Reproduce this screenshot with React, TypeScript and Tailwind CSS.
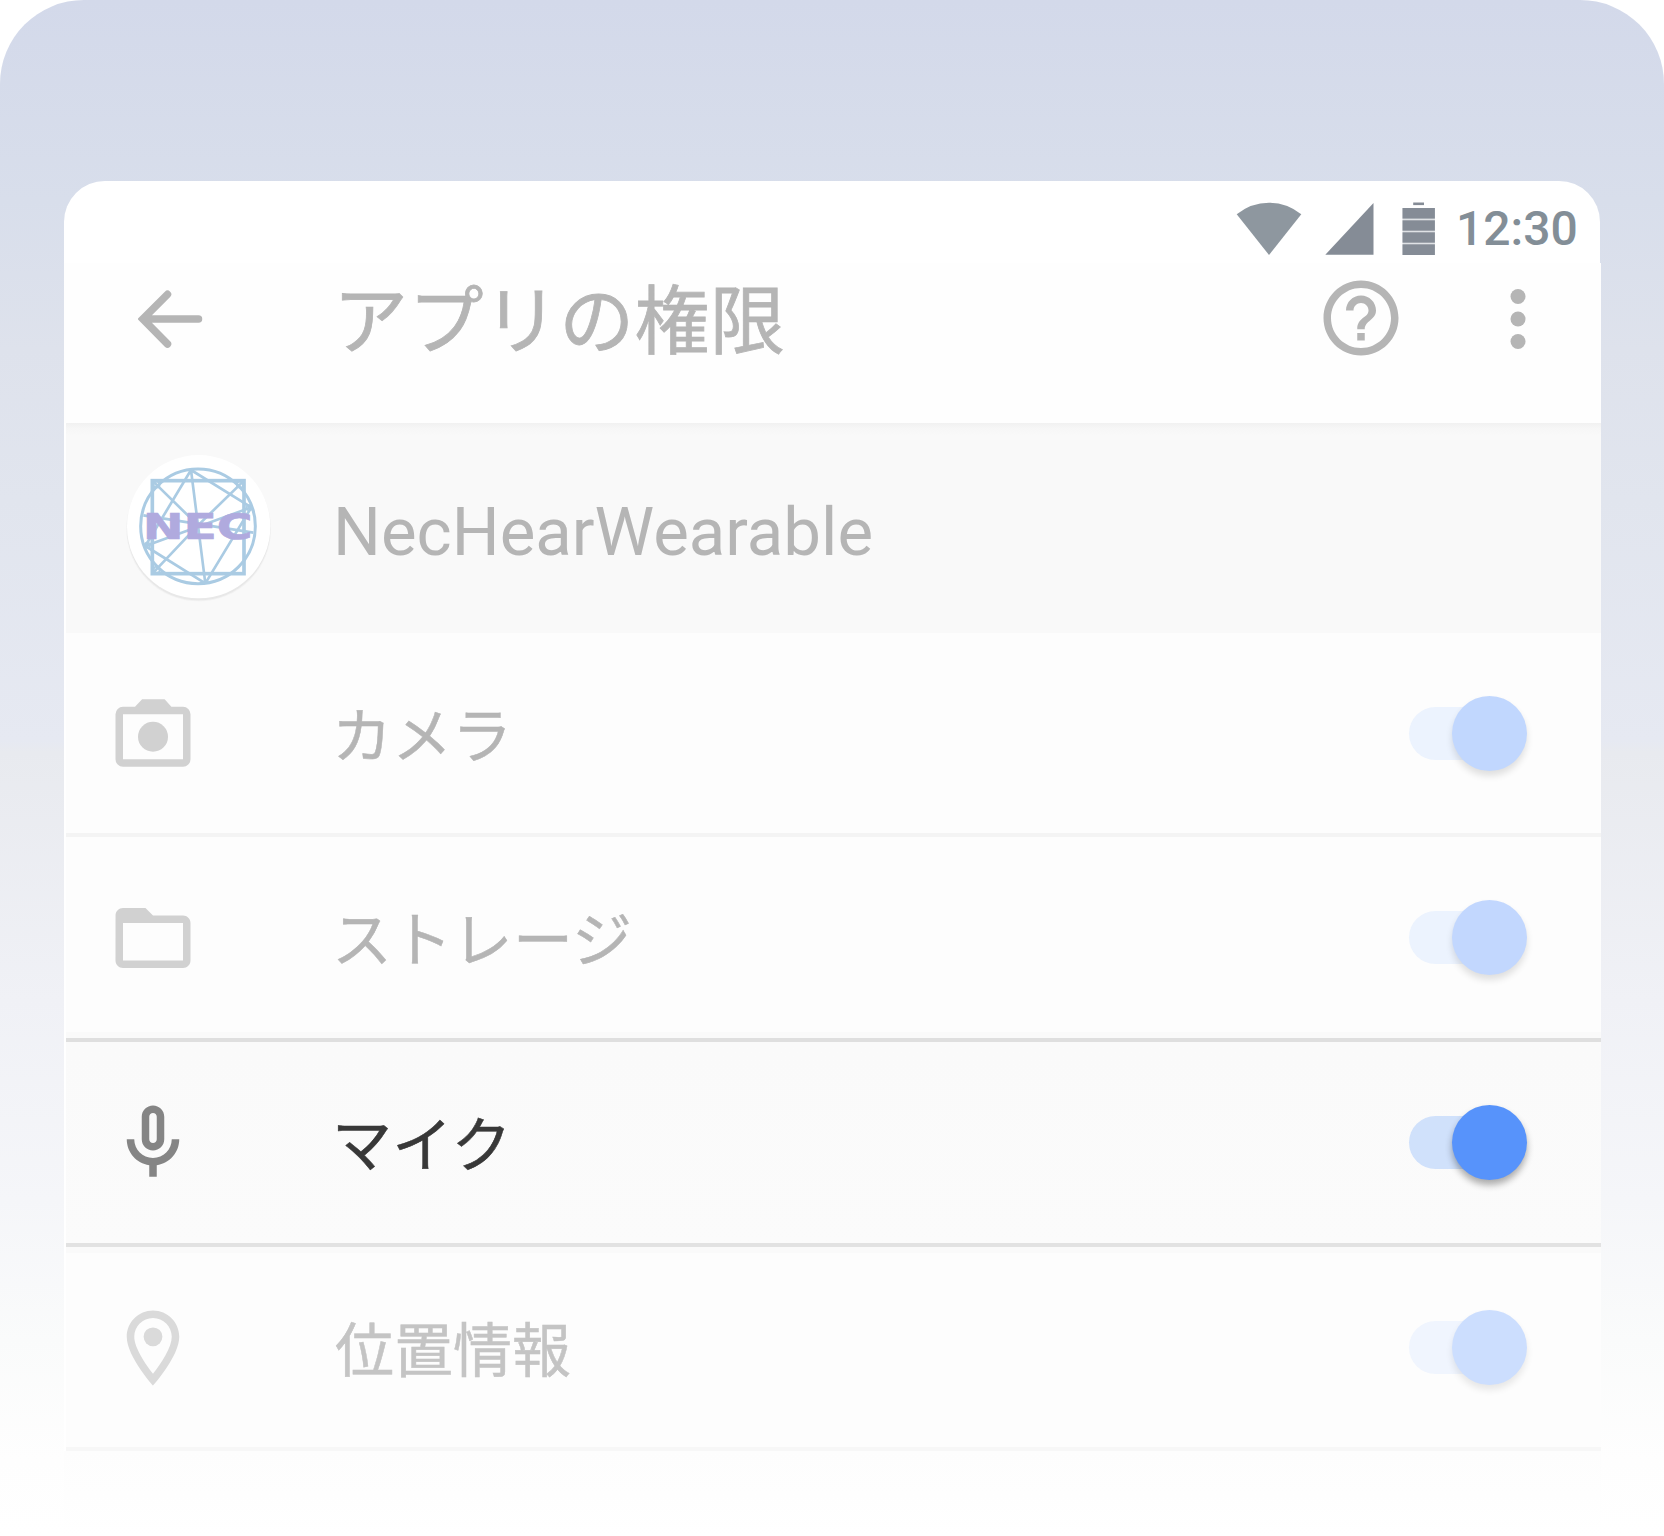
import type { ReactNode } from "react";

const FONT = "font-['Roboto','Noto_Sans_CJK_JP',sans-serif]";

function Icon({ children, className }: { children: ReactNode; className: string }) {
  return (
    <svg viewBox="0 0 24 24" className={`block size-[90px] shrink-0 fill-current ${className}`}>
      {children}
    </svg>
  );
}

function StatusBar() {
  return (
    <div className="flex h-[82px] items-start rounded-t-[41px] bg-white">
      <svg viewBox="0 0 66 54" className="mt-[21px] ml-[1172px] h-[54px] w-[66px] shrink-0">
        <path d="M.7 12.3Q15 .7 33 .7T65.3 12.3L33 53z" fill="#8e979f" />
      </svg>
      <svg viewBox="0 0 49 54" className="mt-[21px] ml-[23px] h-[54px] w-[49px] shrink-0">
        <path d="M.3 52.8 48.5 1v51.8z" fill="#858c96" />
      </svg>
      <svg viewBox="0 0 33 54" className="mt-[21px] ml-[28px] h-[54px] w-[33px] shrink-0">
        <rect x=".5" y="6" width="32.4" height="47" fill="#dfe2e5" />
        <g fill="#858c96">
          <rect x="11.2" y=".5" width="10.8" height="2.6" />
          <rect x=".5" y="6" width="32.4" height="10.6" />
          <rect x=".5" y="18.3" width="32.4" height="10.4" />
          <rect x=".5" y="30.3" width="32.4" height="10.4" />
          <rect x=".5" y="42.3" width="32.4" height="10.7" />
        </g>
      </svg>
      <span className="mt-[19px] ml-[21px] text-[48px] leading-[58px] font-medium text-[#838e97]">12:30</span>
    </div>
  );
}

function Header() {
  return (
    <div className="flex h-[160px] w-[1537px] items-start bg-[#fefefe] text-[#b5b5b5]">
      <svg viewBox="0 0 66 60" className="mt-[26px] ml-[74px] h-[60px] w-[66px] shrink-0" fill="none" stroke="currentColor" strokeWidth="7.5" strokeLinecap="round">
        <path d="M29.5 5.3 4.8 30l24.7 25M6 30h54.5" />
      </svg>
      <h1 className="mt-[12px] ml-[129px] w-[502px] text-[75px] leading-[94px] tracking-[0.4px] whitespace-nowrap [-webkit-text-stroke:0.8px_currentColor]">アプリの権限</h1>
      <Icon className="mt-[9.5px] ml-[480.5px]">
        <path d="M11 18h2v-2h-2v2zm1-16C6.48 2 2 6.48 2 12s4.48 10 10 10 10-4.48 10-10S17.52 2 12 2zm0 18c-4.41 0-8-3.59-8-8s3.59-8 8-8 8 3.59 8 8-3.59 8-8 8zm0-14c-2.21 0-4 1.79-4 4h2c0-1.1.9-2 2-2s2 .9 2 2c0 2-3 1.75-3 5h2c0-2.25 3-2.5 3-5 0-2.21-1.79-4-4-4z" />
      </Icon>
      <Icon className="mt-[11px] ml-[67px]">
        <circle cx="12" cy="6" r="2" />
        <circle cx="12" cy="12" r="2" />
        <circle cx="12" cy="18" r="2" />
      </Icon>
    </div>
  );
}

function NecLogo() {
  return (
    <svg viewBox="0 0 540 540" className="mt-[17px] ml-[44px] size-[180px] shrink-0">
      <circle cx="266" cy="267" r="217" fill="#dedede" opacity=".25" />
      <circle cx="266" cy="266" r="215" fill="#dedede" opacity=".5" />
      <circle cx="266" cy="260" r="215" fill="#fff" />
      <g fill="none" stroke="#aacbe3">
        <circle cx="264" cy="259" r="172" strokeWidth="9" />
        <rect x="127" y="122" width="275" height="279" strokeWidth="11" />
        <g strokeWidth="8">
          <path d="M243 90 286 430M243 90 106 318M243 90 424 202M286 430 424 202M286 430 106 318" />
          <path d="M127 122 264 256M402 122 264 256 127 401M106 318 424 202" />
          <path d="M100 226 430 278" />
        </g>
        <g strokeWidth="5">
          <circle cx="140" cy="134" r="9" />
          <circle cx="390" cy="134" r="9" />
          <circle cx="140" cy="389" r="9" />
          <circle cx="418" cy="203" r="8" />
          <circle cx="112" cy="316" r="8" />
        </g>
      </g>
      <text x="98" y="298" textLength="330" lengthAdjust="spacingAndGlyphs" className="font-['DejaVu_Sans',sans-serif] text-[106px] font-bold" fill="#b0aade" stroke="#b0aade" strokeWidth="2">
        NEC
      </text>
    </svg>
  );
}

function Switch({ track, thumb, shadow }: { track: string; thumb: string; shadow: string }) {
  return (
    <div className="relative ml-auto h-[75px] w-[118px] shrink-0">
      <div className={`absolute top-[11px] left-0 h-[53px] w-[90px] rounded-full ${track}`} />
      <div className={`absolute top-0 right-0 size-[75px] rounded-full ${thumb} ${shadow}`} />
    </div>
  );
}

const icons = {
  camera: (
    <>
      <path fillRule="evenodd" d="M4 5h3.2l1.9-2h6l1.8 2H20a2 2 0 0 1 2 2v12a2 2 0 0 1-2 2H4a2 2 0 0 1-2-2V7a2 2 0 0 1 2-2zm0 2v12h16V7z" />
      <circle cx="12" cy="13" r="4" />
    </>
  ),
  folder: (
    <path fillRule="evenodd" d="M20 6h-8l-2-2H4c-1.1 0-1.99.9-1.99 2L2 18c0 1.1.9 2 2 2h16c1.1 0 2-.9 2-2V8c0-1.1-.9-2-2-2zm0 12H4V8h16v10z" />
  ),
  mic: (
    <>
      <path fillRule="evenodd" d="M12 14c1.66 0 3-1.34 3-3V5c0-1.66-1.34-3-3-3S9 3.34 9 5v6c0 1.66 1.34 3 3 3zm-1-9c0-.55.45-1 1-1s1 .45 1 1v6c0 .55-.45 1-1 1s-1-.45-1-1V5z" />
      <path d="M17 11c0 2.76-2.24 5-5 5s-5-2.24-5-5H5c0 3.53 2.61 6.43 6 6.92V21h2v-3.08c3.39-.49 6-3.39 6-6.92h-2z" />
    </>
  ),
  pin: (
    <>
      <path fillRule="evenodd" d="M12 2C8.13 2 5 5.13 5 9c0 5.25 7 13 7 13s7-7.75 7-13c0-3.87-3.13-7-7-7zM7 9c0-2.76 2.24-5 5-5s5 2.24 5 5c0 2.88-2.88 7.19-5 9.88C9.92 16.21 7 11.85 7 9z" />
      <circle cx="12" cy="9" r="2.5" />
    </>
  ),
};

const rows = [
  {
    label: "カメラ", icon: icons.camera,
    row: "h-[204px] bg-[#fdfdfd]", content: "mt-[55px]", iconColor: "text-[#d1d1d1]", text: "ml-[134px] text-[60px] text-[#b5b5b5]",
    line: "bg-[#f4f4f4]", track: "bg-[#ecf3fe]", thumb: "bg-[#c1d7fe]",
    shadow: "shadow-[0_5px_7px_rgba(0,0,0,0.12)]", before: "", after: "",
  },
  {
    label: "ストレージ", icon: icons.folder,
    row: "h-[205px] bg-[#fdfdfd]", content: "mt-[55.5px]", iconColor: "text-[#d1d1d1]", text: "ml-[134px] text-[60px] tracking-[0.3px] text-[#b5b5b5]",
    line: "bg-[#dfdfdf]", track: "bg-[#ecf3fe]", thumb: "bg-[#c2d7fe]",
    shadow: "shadow-[0_5px_7px_rgba(0,0,0,0.12)]", before: "", after: "h-[6px] bg-[#fafafa]",
  },
  {
    label: "マイク", icon: icons.mic,
    row: "h-[205px] bg-gradient-to-b from-[#fafafa] to-[#fbfbfb]", content: "mt-[55.5px]", iconColor: "text-[#858585]", text: "ml-[134px] text-[60px] tracking-[0.3px] text-[#383838]",
    line: "bg-[#e2e2e2]", track: "bg-[#d0e1fb]", thumb: "bg-[#5793fb]",
    shadow: "shadow-[0_5px_7px_rgba(0,0,0,0.32)]", before: "", after: "",
  },
  {
    label: "位置情報", icon: icons.pin,
    row: "h-[204px] bg-[#fdfdfd]", content: "mt-[49.5px]", iconColor: "text-[#dadada]", text: "ml-[137px] text-[59px] text-[#c4c4c4]",
    line: "bg-[#f7f7f7]", track: "bg-[#f0f5fe]", thumb: "bg-[#ccdefe]",
    shadow: "shadow-[0_5px_7px_rgba(0,0,0,0.09)]", before: "h-[6px] bg-[#fafafa]", after: "",
  },
];

export default function App() {
  return (
    <div className={`h-[1536px] w-[1664px] overflow-hidden bg-white ${FONT}`} lang="ja">
      <div className="h-[1536px] rounded-t-[84px] bg-[linear-gradient(to_bottom,#d3d9ea_0px,#d8deeb_200px,#dee2ec_350px,#e1e5ee_500px,#e6e9f2_740px,#e8eaef_752px,#f0f1f6_1000px,#f5f6f9_1200px,#fafbfb_1340px,#fefefe_1460px,#ffffff_1536px)] px-[64px] pt-[181px]">
        <div className="w-[1536px]">
          <StatusBar />
          <Header />
          <div className="flex h-[210px] w-[1537px] items-start border-l-2 border-white bg-[linear-gradient(to_bottom,#f1f1f1_0px,#f6f6f6_5px,#f9f9f9_12px)]">
            <NecLogo />
            <span className="mt-[64px] ml-[43px] text-[67.2px] leading-[90px] text-[#b5b5b5]">NecHearWearable</span>
          </div>
          {rows.map((r) => (
            <div key={r.label} className={`flex w-[1537px] flex-col border-l-2 border-white ${r.row}`}>
              <div className={`shrink-0 ${r.before}`} />
              <div className={`flex h-[90px] shrink-0 items-center ${r.content}`}>
                <Icon className={`ml-[42px] ${r.iconColor}`}>{r.icon}</Icon>
                <span className={`mt-[9px] leading-[90px] whitespace-nowrap [-webkit-text-stroke:0.5px_currentColor] ${r.text}`}>{r.label}</span>
                <Switch track={r.track} thumb={r.thumb} shadow={r.shadow} />
                <div className="w-[74px] shrink-0" />
              </div>
              <div className={`mt-auto shrink-0 ${r.after}`} />
              <div className={`h-[4px] shrink-0 ${r.line}`} />
            </div>
          ))}
          <div className="h-[85px] w-[1537px] bg-gradient-to-b from-[#fdfdfd] to-white" />
        </div>
      </div>
    </div>
  );
}
